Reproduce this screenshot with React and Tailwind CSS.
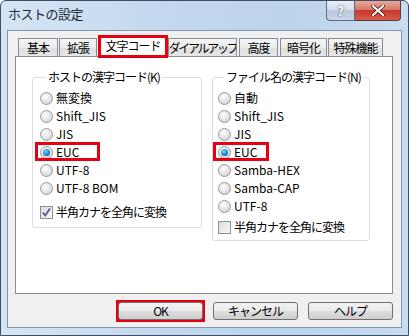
import React from 'react'

const RED = 'border-[#e60012]'

function Radio({ label, checked, marked, markWidth }) {
  return (
    <div className="relative flex h-[18px] items-center">
      <span
        className={
          'h-[13px] w-[13px] shrink-0 rounded-full border border-[#9a9a9a] flex items-center justify-center ' +
          'bg-[radial-gradient(circle_at_40%_35%,#ffffff,#e2e2e2_55%,#c9c9c9)]'
        }
      >
        {checked && (
          <span className="h-[7px] w-[7px] rounded-full bg-[radial-gradient(circle_at_40%_35%,#7fd3ff,#1c8fd6_50%,#0b4f86)]" />
        )}
      </span>
      <span className="ml-[3px] leading-none">{label}</span>
      {/* red highlight box */}
      {marked && (
        <span
          className={'absolute left-[-5px] top-[-1px] h-[19px] border-[3px] ' + RED}
          style={{ width: markWidth }}
        />
      )}
    </div>
  )
}

function Check({ label, checked }) {
  return (
    <div className="flex h-[18px] items-center">
      <span className="flex h-[13px] w-[13px] shrink-0 items-center justify-center border border-[#8e8f8f] bg-[linear-gradient(135deg,#dcdcdc,#f8f8f8)]">
        {checked && (
          <svg width="11" height="11" viewBox="0 0 11 11">
            <path d="M2 5.5 L4.3 8.5 L9 1.5" fill="none" stroke="#4a5d8c" strokeWidth="1.8" />
          </svg>
        )}
      </span>
      <span className="ml-[3px] leading-none tracking-[-1px]">{label}</span>
    </div>
  )
}

function Tab({ label, w, ml, track = 'tracking-[-1px]' }) {
  return (
    <div
      className={
        'flex h-[18px] items-center justify-center overflow-hidden whitespace-nowrap border border-b-0 border-[#898c95] leading-none ' +
        'bg-[linear-gradient(#f4f4f4,#ececec_50%,#dfdfdf_50%,#e6e6e6)] ' +
        track + ' ' + w + ' ' + ml
      }
    >
      {label}
    </div>
  )
}

function Button({ label }) {
  return (
    <div className="flex h-[18px] w-[85px] items-center justify-center rounded-[3px] border border-[#707070] bg-[linear-gradient(#f2f2f2,#ebebeb_50%,#dddddd_50%,#cfcfcf)] leading-none tracking-[-1px]">
      {label}
    </div>
  )
}

export default function App() {
  return (
    <div className="flex h-[336px] w-[409px] flex-col rounded-t-[6px] border border-[#3d4d63] bg-[linear-gradient(90deg,#d6e5f5,#c3d8ee_40%,#bcd3ec_70%,#c9dcf0)] font-['Noto_Sans_CJK_JP',sans-serif] text-[12px] text-black">
      {/* Title bar */}
      <div className="flex h-[29px] shrink-0 items-start justify-between pr-[7px]">
        <div className="pl-[7px] pt-[6px] text-[13px] leading-none tracking-[-0.5px] text-[#1e2a3c]">ホストの設定</div>
        <div className="flex">
          <div className="flex h-[20px] w-[29px] items-center justify-center rounded-bl-[4px] border border-t-0 border-[#5b6e86] bg-[linear-gradient(#e8eef6,#d5e0ec_45%,#b8c9dc_50%,#c9d7e6)] text-[13px] font-bold leading-none text-white [text-shadow:0_0_2px_#333]">
            ?
          </div>
          <div className="flex h-[20px] w-[46px] items-center justify-center rounded-br-[4px] border border-l-0 border-t-0 border-[#5b3c3a] bg-[linear-gradient(#e9a89b,#d8786b_45%,#c8392d_50%,#d8594b)]">
            <svg width="14" height="11" viewBox="0 0 14 11">
              <path d="M2 1 L12 10 M12 1 L2 10" stroke="#3a1410" strokeWidth="3.6" strokeLinecap="round" />
              <path d="M2 1 L12 10 M12 1 L2 10" stroke="#ffffff" strokeWidth="2.2" strokeLinecap="round" />
            </svg>
          </div>
        </div>
      </div>

      {/* Client area */}
      <div className="mx-[6px] mb-[7px] flex flex-1 flex-col border border-[#8497b0] bg-[#f0f0f0] pl-[7px] pr-[8px] pt-[7px]">
        {/* Tabs */}
        <div className="flex h-[18px] items-start">
          <Tab label="基本" w="w-[40px]" ml="ml-[3px]" />
          <Tab label="拡張" w="w-[38px]" ml="ml-[1px]" />
          <div className={'relative z-10 -mt-[3px] ml-[1px] flex h-[23px] w-[70px] items-center justify-center border-[3px] bg-white pb-[2px] leading-none tracking-[-1px] ' + RED}>
            文字コード
          </div>
          <Tab label="ダイアルアップ" w="w-[69px]" ml="ml-0" track="tracking-[-2.3px]" />
          <Tab label="高度" w="w-[39px]" ml="ml-[2px]" />
          <Tab label="暗号化" w="w-[47px]" ml="ml-[2px]" />
          <Tab label="特殊機能" w="w-[55px]" ml="ml-[1px]" />
        </div>

        {/* Tab panel */}
        <div className="flex h-[238px] items-start border border-[#898c95] bg-white pl-[16px] pt-[13px]">
          <fieldset className="w-[170px] rounded-[3px] border border-[#d5dfe5] pb-[6px] pl-[7px]">
            <legend className="ml-[6px] px-[2px] leading-[14px] tracking-[-1px]">ホストの漢字コード(K)</legend>
            <div className="pt-[5px]">
              <Radio label="無変換" />
              <Radio label="Shift_JIS" />
              <Radio label="JIS" />
              <Radio label="EUC" checked marked markWidth={65} />
              <Radio label="UTF-8" />
              <Radio label="UTF-8 BOM" />
              <div className="mt-[6px]">
                <Check label="半角カナを全角に変換" checked />
              </div>
            </div>
          </fieldset>

          <fieldset className="ml-[10px] w-[158px] rounded-[3px] border border-[#d5dfe5] pb-[4px] pl-[5px]">
            <legend className="ml-[6px] px-[2px] leading-[14px] tracking-[-1px]">ファイル名の漢字コード(N)</legend>
            <div className="pt-[5px]">
              <Radio label="自動" />
              <Radio label="Shift_JIS" />
              <Radio label="JIS" />
              <Radio label="EUC" checked marked markWidth={56} />
              <Radio label="Samba-HEX" />
              <Radio label="Samba-CAP" />
              <Radio label="UTF-8" />
              <div className="mt-[3px]">
                <Check label="半角カナを全角に変換" />
              </div>
            </div>
          </fieldset>
        </div>

        {/* Buttons */}
        <div className="mt-[8px] flex justify-end gap-[10px]">
          <div className={'-m-[2px] border-[3px] ' + RED}>
            <div className="-m-[1px]">
              <Button label="OK" />
            </div>
          </div>
          <Button label="キャンセル" />
          <Button label="ヘルプ" />
        </div>
      </div>
    </div>
  )
}
